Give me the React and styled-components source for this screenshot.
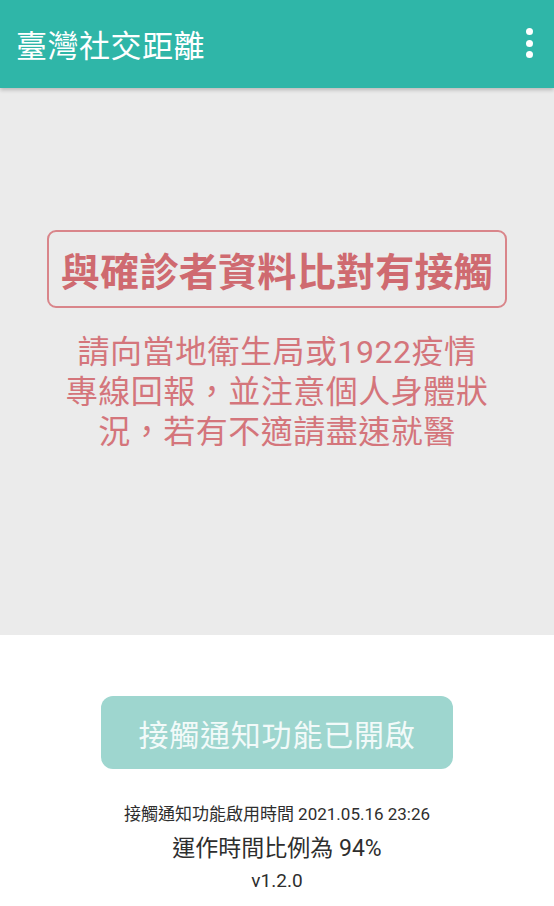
import React from "react";
import styled, { createGlobalStyle } from "styled-components";

const Global = createGlobalStyle`
  html, body { margin: 0; padding: 0; background: #ffffff; }
  body { font-family: Roboto, "Noto Sans CJK TC", sans-serif; }
`;

const Page = styled.div`
  width: 554px;
  height: 906px;
  display: flex;
  flex-direction: column;
  overflow: hidden;
`;

const AppBar = styled.header`
  height: 88px;
  flex: none;
  background: #2fb6a8;
  display: flex;
  align-items: center;
  justify-content: space-between;
  padding: 0 16px 0 16px;
  box-sizing: border-box;
  box-shadow: 0 2px 4px rgba(0, 0, 0, 0.22);
  position: relative;
  z-index: 1;
`;

const Title = styled.h1`
  margin: 0;
  font-family: Roboto, "Noto Sans CJK TC", sans-serif;
  font-weight: 400;
  font-size: 31px;
  color: #ffffff;
  letter-spacing: 0.5px;
  margin-top: -2px;
`;

const MenuButton = styled.div`
  width: 10px;
  height: 30px;
  display: flex;
  flex-direction: column;
  justify-content: space-between;
  align-items: center;
  margin-right: 4px;
  margin-top: -2px;
`;

const Dot = styled.span`
  width: 7px;
  height: 7px;
  border-radius: 50%;
  background: #ffffff;
`;

const AlertArea = styled.section`
  height: 547px;
  flex: none;
  background: #ebebeb;
  display: flex;
  flex-direction: column;
  align-items: center;
  padding-top: 142px;
  box-sizing: border-box;
`;

const AlertBox = styled.div`
  width: 460px;
  height: 78px;
  box-sizing: border-box;
  border: 2px solid #d9858a;
  border-radius: 9px;
  display: flex;
  align-items: center;
  justify-content: center;
  color: #cf6a70;
  font-family: "Noto Sans CJK TC", sans-serif;
  font-weight: 700;
  font-size: 39px;
  letter-spacing: 0.3px;
`;

const AlertText = styled.p`
  margin: 24px 0 0;
  text-align: center;
  color: #d4757b;
  font-family: Roboto, "Noto Sans CJK TC", sans-serif;
  font-size: 32px;
  line-height: 40px;
  letter-spacing: 0.5px;
  white-space: nowrap;
`;

const Footer = styled.section`
  flex: 1;
  display: flex;
  flex-direction: column;
  align-items: center;
  padding-top: 61px;
`;

const StatusButton = styled.button`
  width: 352px;
  height: 73px;
  border: none;
  border-radius: 12px;
  background: #9ed6cf;
  color: #f2faf9;
  font-family: Roboto, "Noto Sans CJK TC", sans-serif;
  font-size: 30px;
  letter-spacing: 0.8px;
  padding: 0;
`;

const Info = styled.div`
  margin-top: ${(p) => p.$mt}px;
  font-family: Roboto, "Noto Sans CJK TC", sans-serif;
  font-size: ${(p) => p.$size}px;
  line-height: ${(p) => p.$lh}px;
  color: #2e2e2e;
`;

export default function App() {
  return (
    <Page>
      <Global />
      <AppBar>
        <Title>臺灣社交距離</Title>
        <MenuButton>
          <Dot />
          <Dot />
          <Dot />
        </MenuButton>
      </AppBar>
      <AlertArea>
        <AlertBox>與確診者資料比對有接觸</AlertBox>
        <AlertText>
          請向當地衛生局或1922疫情
          <br />
          專線回報，並注意個人身體狀
          <br />
          況，若有不適請盡速就醫
        </AlertText>
      </AlertArea>
      <Footer>
        <StatusButton>接觸通知功能已開啟</StatusButton>
        <Info $mt={33} $size={17} $lh={24}>
          接觸通知功能啟用時間 2021.05.16 23:26
        </Info>
        <Info $mt={8} $size={23} $lh={30}>
          運作時間比例為 94%
        </Info>
        <Info $mt={3} $size={19} $lh={28}>
          v1.2.0
        </Info>
      </Footer>
    </Page>
  );
}
